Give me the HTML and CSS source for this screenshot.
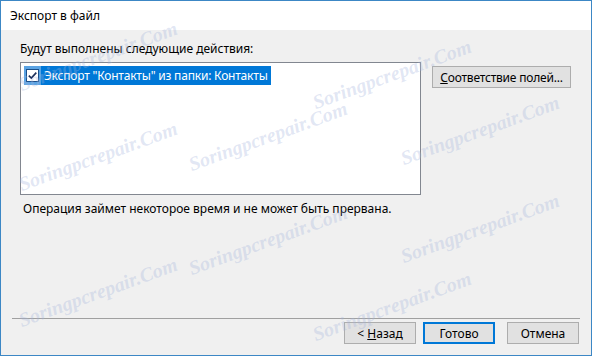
FILE: index.html
```html
<!DOCTYPE html>
<html lang="ru">
<head>
    <meta charset="UTF-8">
    <title>Экспорт в файл</title>
    <link rel="stylesheet" href="styles.css">
</head>
<body>
    <div class="window">
        <div class="titlebar">Экспорт в файл</div>

        <div class="content">
            <p class="label">Будут выполнены следующие действия:</p>
            <div class="row">
                <div class="list">
                    <div class="item selected">
                        <span class="check">
                            <svg width="13" height="13" viewBox="0 0 13 13">
                                <rect x="0.5" y="0.5" width="12" height="12" fill="#fff" stroke="#1a4f8a"/>
                                <path d="M2.8 6.6 L5.3 9.1 L10.3 3.6" fill="none" stroke="#1c2f5a" stroke-width="1.6"/>
                            </svg>
                        </span>
                        <span class="item-text">Экспорт "Контакты" из папки: Контакты</span>
                    </div>
                </div>
                <button class="btn map-btn"><u>С</u>оответствие полей...</button>
            </div>
            <p class="note">Операция займет некоторое время и не может быть прервана.</p>
        </div>

        <div class="footer">
            <button class="btn">&lt; <u>Н</u>азад</button>
            <button class="btn default">Готово</button>
            <button class="btn">Отмена</button>
        </div>

        <!-- водяные знаки -->
        <div class="wm" style="left:22px;top:72px">Soringpcrepair.Com</div>
        <div class="wm" style="left:316px;top:90px">Soringpcrepair.Com</div>
        <div class="wm" style="left:192px;top:152px">Soringpcrepair.Com</div>
        <div class="wm" style="left:22px;top:172px">Soringpcrepair.Com</div>
        <div class="wm" style="left:404px;top:146px">Soringpcrepair.Com</div>
        <div class="wm" style="left:192px;top:256px">Soringpcrepair.Com</div>
        <div class="wm" style="left:404px;top:244px">Soringpcrepair.Com</div>
        <div class="wm" style="left:22px;top:308px">Soringpcrepair.Com</div>
        <div class="wm" style="left:316px;top:322px">Soringpcrepair.Com</div>
    </div>
</body>
</html>
```

FILE: styles.css
```css
html, body {
    margin: 0;
    padding: 0;
}
body {
    font-family: "Noto Sans", "Open Sans", sans-serif;
    font-size: 12px;
    color: #000;
    background-color: #f0f0f0;
}
.window {
    position: relative;
    width: 590px;
    height: 354px;
    border: 1px solid #3c87c5;
    background-color: #f0f0f0;
    overflow: hidden;
    display: flex;
    flex-direction: column;
}
.titlebar {
    height: 29px;
    line-height: 29px;
    padding-left: 9px;
    background-color: #fff;
    font-size: 12px;
}
.content {
    flex: 1;
    padding: 11px 19px 0 19px;
}
.label {
    margin: 0;
    line-height: 16px;
}
.row {
    display: flex;
    align-items: flex-start;
    gap: 11px;
    margin-top: 5px;
}
.list {
    width: 396px;
    height: 128px;
    background-color: #fff;
    border: 1px solid #828790;
    padding: 3px 0 0 3px;
    box-sizing: content-box;
}
.item {
    display: inline-flex;
    align-items: center;
    height: 19px;
}
.item.selected {
    background-color: #0078d7;
    color: #fff;
}
.check {
    display: flex;
    align-items: center;
    justify-content: center;
    width: 17px;
    height: 19px;
    background-color: #5aa3e3;
}
.check svg {
    display: block;
}
.item-text {
    padding: 0 3px 0 3px;
    line-height: 19px;
    white-space: nowrap;
    letter-spacing: -0.2px;
}
.btn {
    font-family: "Noto Sans", "Open Sans", sans-serif;
    font-size: 12px;
    height: 22px;
    padding: 0;
    background-color: #e1e1e1;
    border: 1px solid #adadad;
    color: #000;
    box-sizing: border-box;
}
.btn u {
    text-decoration: underline;
}
.map-btn {
    width: 139px;
    margin-top: 4px;
    letter-spacing: -0.2px;
}
.note {
    margin: 6px 0 0 3px;
    line-height: 16px;
}
.footer {
    margin: 0 11px 0 11px;
    border-top: 1px solid #a0a0a0;
    padding: 3px 1px 11px 0;
    display: flex;
    justify-content: flex-end;
    gap: 7px;
}
.footer .btn {
    width: 72px;
}
.footer .btn:last-child {
    margin-left: 5px;
}
.btn.default {
    border: 2px solid #0078d7;
}
.wm {
    position: absolute;
    font-family: "Liberation Serif", serif;
    font-style: italic;
    font-weight: bold;
    font-size: 20px;
    line-height: 22px;
    color: rgba(165, 180, 220, 0.32);
    transform: rotate(-20deg);
    transform-origin: left bottom;
    pointer-events: none;
    white-space: nowrap;
}
```
